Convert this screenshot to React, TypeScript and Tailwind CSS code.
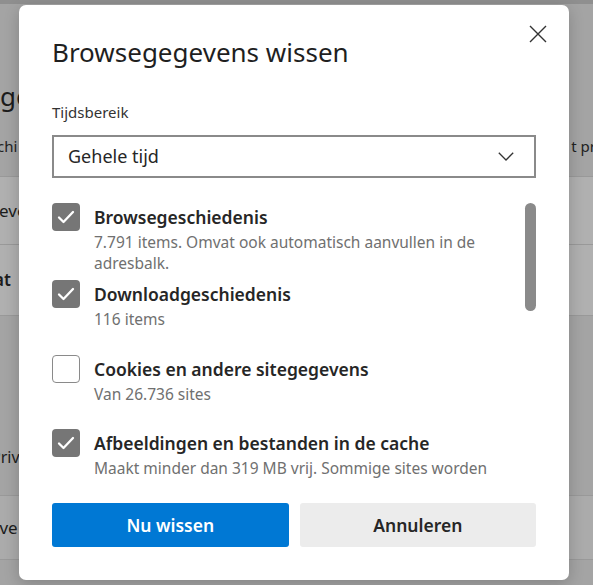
import React from "react";

const font = { fontFamily: '"Noto Sans", "Open Sans", sans-serif' };

function Check({ checked }: { checked: boolean }) {
  return checked ? (
    <div className="flex h-[28px] w-[28px] shrink-0 items-center justify-center rounded-[4px] bg-[#767676]">
      <svg width="18" height="14" viewBox="0 0 18 14" fill="none">
        <path d="M2 7.5 L6.5 12 L16 2" stroke="white" strokeWidth="2.3" strokeLinecap="round" strokeLinejoin="round" />
      </svg>
    </div>
  ) : (
    <div className="h-[28px] w-[28px] shrink-0 rounded-[4px] border border-[#8a8a8a] bg-white" />
  );
}

function Item({ checked, label, desc, h }: { checked: boolean; label: string; desc: string; h: string }) {
  return (
    <div className={`flex gap-[14px] ${h}`}>
      <Check checked={checked} />
      <div className="flex flex-col pt-[2px]">
        <div className="text-[17.5px] font-semibold leading-[24px] text-[#262626]">{label}</div>
        <div className="mt-[3px] text-[15.5px] leading-[21px] text-[#707070]">{desc}</div>
      </div>
    </div>
  );
}

export default function App() {
  return (
    <div className="relative h-[585px] w-[593px] overflow-hidden bg-[#a4a4a4]" style={font}>
      {/* dimmed page behind the dialog */}
      <div className="flex h-full flex-col">
        <div className="h-[4px] bg-[#8f8f8f]" />
        <div className="flex h-[172px] flex-col">
          <div className="mt-[76px] text-[26px] leading-[32px] text-[#1c1c1c]">ge</div>
          <div className="mt-[24px] flex justify-between text-[15px] leading-[20px] text-[#222]">
            <span className="ml-[-3px]">chi</span>
            <span className="mr-[-3px]">t pr</span>
          </div>
        </div>
        <div className="flex h-[68px] items-center border-t border-[#999] bg-[#b0b0b0] text-[17px] text-[#1c1c1c]">
          <span className="ml-[-12px]">Beve</span>
        </div>
        <div className="flex h-[71px] items-center border-t border-[#999] bg-[#b0b0b0] text-[17px] font-semibold text-[#1c1c1c]">
          <span className="ml-[-6px]">at</span>
        </div>
        <div className="flex h-[180px] items-end border-t border-[#999] pb-[26px] text-[16px] text-[#1c1c1c]">
          <span className="ml-[-9px]">Priv</span>
        </div>
        <div className="flex h-[64px] items-center border-t border-[#999] bg-[#ababab] text-[17px] text-[#1c1c1c]">
          <span className="ml-[-6px]">-ve</span>
        </div>
        <div className="flex-1 border-t border-[#999] bg-[#a4a4a4]" />
      </div>

      {/* dialog */}
      <div className="absolute left-[19px] top-[5px] flex h-[575px] w-[550px] flex-col rounded-[7px] bg-white px-[33px] shadow-[0_4px_16px_rgba(0,0,0,0.2)]">
        <button className="absolute right-[18px] top-[16px] flex h-[26px] w-[26px] items-center justify-center">
          <svg width="18" height="18" viewBox="0 0 18 18">
            <path d="M1 1 L17 17 M17 1 L1 17" stroke="#333" strokeWidth="1.4" />
          </svg>
        </button>
        <h1 className="mt-[31px] text-[26px] font-normal leading-[32px] text-[#1f1f1f]">Browsegegevens wissen</h1>
        <div className="mt-[34px] text-[15px] leading-[20px] text-[#333]">Tijdsbereik</div>
        <div className="mt-[13px] flex h-[43px] items-center justify-between border-2 border-[#8a8a8a] pl-[14px] pr-[20px] text-[18px] text-[#262626]">
          <span>Gehele tijd</span>
          <svg width="16" height="9" viewBox="0 0 16 9" fill="none">
            <path d="M0.8 0.8 L8 8 L15.2 0.8" stroke="#333" strokeWidth="1.3" />
          </svg>
        </div>
        <div className="relative mt-[17px] h-[283px] overflow-hidden pt-[8px]">
          <div className="absolute right-[0px] top-[8px] h-[108px] w-[11px] rounded-full bg-[#8a8a8a]" />
          <div className="flex flex-col pr-[38px]">
            <Item
              checked
              h="h-[77px]"
              label="Browsegeschiedenis"
              desc="7.791 items. Omvat ook automatisch aanvullen in de adresbalk."
            />
            <Item checked h="h-[75px]" label="Downloadgeschiedenis" desc="116 items" />
            <Item checked={false} h="h-[74px]" label="Cookies en andere sitegegevens" desc="Van 26.736 sites" />
            <Item
              checked
              h="h-[80px]"
              label="Afbeeldingen en bestanden in de cache"
              desc="Maakt minder dan 319 MB vrij. Sommige sites worden mogelijk langzamer geladen bij uw volgende bezoek."
            />
          </div>
        </div>
        <div className="mt-[25px] flex gap-[11px]">
          <button className="h-[44px] flex-1 rounded-[3px] bg-[#0078d4] text-[17.5px] font-semibold leading-[24px] text-white">Nu wissen</button>
          <button className="h-[44px] flex-1 rounded-[3px] bg-[#ececec] text-[17.5px] font-semibold leading-[24px] text-[#262626]">Annuleren</button>
        </div>
      </div>
    </div>
  );
}
